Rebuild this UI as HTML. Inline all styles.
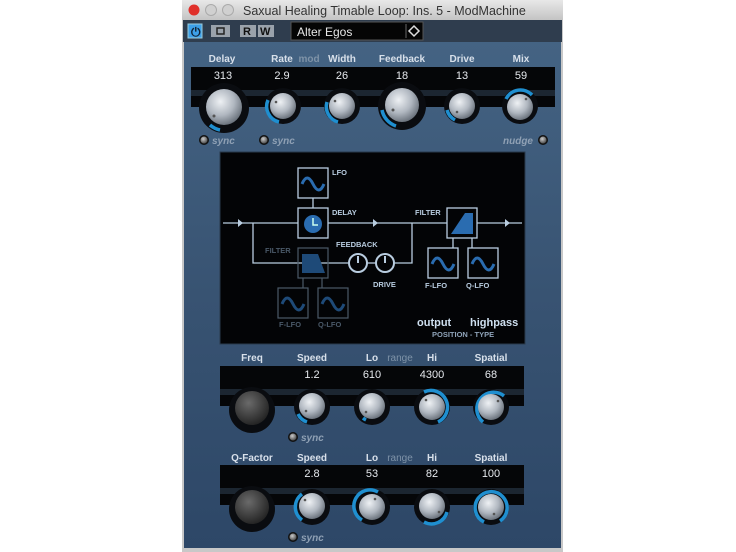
<!DOCTYPE html><html><head><style>
html,body{margin:0;padding:0;background:#fff;width:736px;height:552px;overflow:hidden}
svg{display:block}
text{font-family:"Liberation Sans",sans-serif}
</style></head><body>
<svg width="736" height="552" viewBox="0 0 736 552" xmlns="http://www.w3.org/2000/svg">
<defs>
<linearGradient id="tb" x1="0" y1="0" x2="0" y2="1"><stop offset="0" stop-color="#e8e8e8"/><stop offset="1" stop-color="#c4c4c4"/></linearGradient>
<linearGradient id="pn" x1="0" y1="0" x2="0" y2="1"><stop offset="0" stop-color="#446383"/><stop offset="0.5" stop-color="#385372"/><stop offset="1" stop-color="#2d4767"/></linearGradient>
<radialGradient id="met" cx="0.4" cy="0.35" r="0.7"><stop offset="0" stop-color="#eef1f4"/><stop offset="0.55" stop-color="#b0b7c0"/><stop offset="1" stop-color="#626a74"/></radialGradient>
<radialGradient id="dk" cx="0.4" cy="0.35" r="0.7"><stop offset="0" stop-color="#6a6a6a"/><stop offset="1" stop-color="#202020"/></radialGradient>
<radialGradient id="btn" cx="0.4" cy="0.35" r="0.7"><stop offset="0" stop-color="#ccc"/><stop offset="1" stop-color="#444"/></radialGradient>
</defs>
<rect x="182" y="0" width="381" height="552" fill="#c8c8c8"/>
<rect x="182" y="0" width="381" height="20" fill="url(#tb)"/>
<circle cx="194" cy="10" r="5.5" fill="#e0302a"/>
<circle cx="211" cy="10" r="5.5" fill="#d0d0d0" stroke="#aaa"/>
<circle cx="228" cy="10" r="5.5" fill="#d0d0d0" stroke="#aaa"/>
<text x="243" y="15" font-size="12.5" fill="#333">Saxual Healing Timable Loop: Ins. 5 - ModMachine</text>
<rect x="183" y="20" width="379" height="22" fill="#2f3d4e"/>
<rect x="188" y="24" width="14" height="14" fill="#3da0e8" stroke="#9cd" />
<text x="191" y="36" font-size="12" fill="#123" font-weight="bold">⏻</text>
<rect x="211" y="25" width="19" height="12" fill="#9aa2ab"/>
<rect x="217" y="28" width="7" height="6" fill="none" stroke="#222" stroke-width="1.5"/>
<rect x="240" y="25" width="16" height="12" fill="#9aa2ab"/><text x="243" y="35" font-size="11" font-weight="bold" fill="#111">R</text>
<rect x="258" y="25" width="16" height="12" fill="#9aa2ab"/><text x="260" y="35" font-size="11" font-weight="bold" fill="#111">W</text>
<rect x="291" y="22" width="132" height="18" fill="#050505" stroke="#555"/>
<text x="297" y="36" font-size="12" fill="#e8e8e8">Alter Egos</text>
<line x1="406" y1="24" x2="406" y2="38" stroke="#666"/>
<path d="M414 26 L419 31 L414 36 L409 31Z" fill="none" stroke="#ddd" stroke-width="1.5"/>
<rect x="184" y="42" width="377" height="506" fill="url(#pn)"/>
<g fill="#d8e0ea" font-size="10" font-weight="bold" text-anchor="middle">
<text x="222" y="62">Delay</text><text x="282" y="62">Rate</text><text x="342" y="62">Width</text><text x="402" y="62">Feedback</text><text x="462" y="62">Drive</text><text x="521" y="62">Mix</text>
<text x="309" y="62" fill="#7f93a8">mod</text>
<text x="252" y="361">Freq</text><text x="312" y="361">Speed</text><text x="372" y="361">Lo</text><text x="432" y="361">Hi</text><text x="491" y="361">Spatial</text>
<text x="400" y="361" fill="#7f93a8" font-weight="normal">range</text>
<text x="252" y="461">Q-Factor</text><text x="312" y="461">Speed</text><text x="372" y="461">Lo</text><text x="432" y="461">Hi</text><text x="491" y="461">Spatial</text>
<text x="400" y="461" fill="#7f93a8" font-weight="normal">range</text>
</g>
<rect x="191" y="67" width="364" height="40" fill="#050608"/>
<rect x="191" y="90" width="364" height="6" fill="#1c2631"/>
<rect x="220" y="366" width="304" height="40" fill="#050608"/>
<rect x="220" y="389" width="304" height="6" fill="#1c2631"/>
<rect x="220" y="465" width="304" height="40" fill="#050608"/>
<rect x="220" y="488" width="304" height="6" fill="#1c2631"/>
<g fill="#e6e9ee" font-size="11" text-anchor="middle">
<text x="223" y="79">313</text><text x="282" y="79">2.9</text><text x="342" y="79">26</text><text x="402" y="79">18</text><text x="462" y="79">13</text><text x="521" y="79">59</text>
<text x="312" y="378">1.2</text><text x="372" y="378">610</text><text x="432" y="378">4300</text><text x="491" y="378">68</text>
<text x="312" y="477">2.8</text><text x="372" y="477">53</text><text x="432" y="477">82</text><text x="491" y="477">100</text>
</g>
<g>
<circle cx="224" cy="108" r="25" fill="#0a0c10"/><path d="M210 125 A22 22 0 0 0 220 130" stroke="#1f8fd0" stroke-width="3.5" fill="none"/><circle cx="224" cy="107" r="18" fill="url(#met)"/><circle cx="214" cy="116" r="1.5" fill="#555"/>
<circle cx="283" cy="106" r="18" fill="#0a0c10"/><path d="M268 100 A16 16 0 0 0 279 122" stroke="#1f8fd0" stroke-width="3.5" fill="none"/><circle cx="283" cy="106" r="13" fill="url(#met)"/><circle cx="276" cy="102" r="1.3" fill="#555"/>
<circle cx="342" cy="106" r="18" fill="#0a0c10"/><path d="M327 102 A16 16 0 0 0 338 122" stroke="#1f8fd0" stroke-width="3.5" fill="none"/><circle cx="342" cy="106" r="13" fill="url(#met)"/><circle cx="335" cy="101" r="1.3" fill="#555"/>
<circle cx="402" cy="106" r="24" fill="#0a0c10"/><path d="M382 110 A21 21 0 0 0 396 126" stroke="#1f8fd0" stroke-width="3.5" fill="none"/><circle cx="402" cy="105" r="17" fill="url(#met)"/><circle cx="393" cy="110" r="1.5" fill="#555"/>
<circle cx="462" cy="106" r="18" fill="#0a0c10"/><path d="M447 110 A16 16 0 0 0 455 120" stroke="#1f8fd0" stroke-width="3.5" fill="none"/><circle cx="462" cy="106" r="13" fill="url(#met)"/><circle cx="457" cy="112" r="1.3" fill="#555"/>
<circle cx="520" cy="106" r="18" fill="#0a0c10"/><path d="M506 99 A16 16 0 0 1 532 95" stroke="#1f8fd0" stroke-width="3.5" fill="none"/><circle cx="520" cy="107" r="13" fill="url(#met)"/><circle cx="526" cy="99" r="1.3" fill="#555"/>
<circle cx="252" cy="410" r="23" fill="#0a0c10"/><circle cx="252" cy="408" r="17" fill="url(#dk)"/>
<circle cx="312" cy="407" r="18" fill="#0a0c10"/><path d="M298 414 A15 15 0 0 0 307 422" stroke="#1f8fd0" stroke-width="3.5" fill="none"/><circle cx="312" cy="406" r="13" fill="url(#met)"/><circle cx="306" cy="411" r="1.3" fill="#555"/>
<circle cx="372" cy="407" r="18" fill="#0a0c10"/><path d="M363 418 A15 15 0 0 0 366 420" stroke="#1f8fd0" stroke-width="3.5" fill="none"/><circle cx="372" cy="406" r="13" fill="url(#met)"/><circle cx="366" cy="412" r="1.3" fill="#555"/>
<circle cx="432" cy="407" r="18" fill="#0a0c10"/><path d="M424 392 A16 16 0 0 1 438 422" stroke="#1f8fd0" stroke-width="3.5" fill="none"/><circle cx="432" cy="407" r="13" fill="url(#met)"/><circle cx="426" cy="400" r="1.3" fill="#555"/>
<circle cx="491" cy="407" r="18" fill="#0a0c10"/><path d="M483 422 A16 16 0 0 1 504 396" stroke="#1f8fd0" stroke-width="3.5" fill="none"/><circle cx="491" cy="407" r="13" fill="url(#met)"/><circle cx="498" cy="401" r="1.3" fill="#555"/>
<circle cx="252" cy="509" r="23" fill="#0a0c10"/><circle cx="252" cy="507" r="17" fill="url(#dk)"/>
<circle cx="312" cy="507" r="18" fill="#0a0c10"/><path d="M302 520 A16 16 0 0 1 302 494" stroke="#1f8fd0" stroke-width="3.5" fill="none"/><circle cx="312" cy="506" r="13" fill="url(#met)"/><circle cx="305" cy="500" r="1.3" fill="#555"/>
<circle cx="372" cy="507" r="18" fill="#0a0c10"/><path d="M362 520 A16 16 0 0 1 378 492" stroke="#1f8fd0" stroke-width="3.5" fill="none"/><circle cx="372" cy="507" r="13" fill="url(#met)"/><circle cx="375" cy="499" r="1.3" fill="#555"/>
<circle cx="432" cy="507" r="18" fill="#0a0c10"/><path d="M424 522 A16 16 0 0 0 447 512" stroke="#1f8fd0" stroke-width="3.5" fill="none"/><circle cx="432" cy="506" r="13" fill="url(#met)"/><circle cx="439" cy="512" r="1.3" fill="#555"/>
<circle cx="491" cy="507" r="18" fill="#0a0c10"/><path d="M484 522 A16 16 0 1 1 500 521" stroke="#1f8fd0" stroke-width="3.5" fill="none"/><circle cx="491" cy="507" r="13" fill="url(#met)"/><circle cx="494" cy="514" r="1.3" fill="#555"/>
</g>
<g font-size="10" font-weight="bold" font-style="italic" fill="#8fa0b4">
<circle cx="204" cy="140" r="5" fill="#111"/><circle cx="204" cy="140" r="3.5" fill="url(#btn)"/><text x="212" y="144">sync</text>
<circle cx="264" cy="140" r="5" fill="#111"/><circle cx="264" cy="140" r="3.5" fill="url(#btn)"/><text x="272" y="144">sync</text>
<circle cx="543" cy="140" r="5" fill="#111"/><circle cx="543" cy="140" r="3.5" fill="url(#btn)"/><text x="503" y="144">nudge</text>
<circle cx="293" cy="437" r="5" fill="#111"/><circle cx="293" cy="437" r="3.5" fill="url(#btn)"/><text x="301" y="441">sync</text>
<circle cx="293" cy="537" r="5" fill="#111"/><circle cx="293" cy="537" r="3.5" fill="url(#btn)"/><text x="301" y="541">sync</text>
</g>
<rect x="220" y="152" width="305" height="192" fill="#030406" stroke="#2a3a4c"/>
<g stroke="#b9cde0" stroke-width="1.3" fill="none">
<line x1="223" y1="223" x2="298" y2="223"/><line x1="328" y1="223" x2="447" y2="223"/><line x1="477" y1="223" x2="522" y2="223"/>
<polyline points="253,223 253,263 349,263"/><line x1="367" y1="263" x2="376" y2="263"/><polyline points="394,263 412,263 412,223"/>
<rect x="298" y="168" width="30" height="30"/><rect x="298" y="208" width="30" height="30"/><rect x="447" y="208" width="30" height="30"/>
<rect x="428" y="248" width="30" height="30"/><rect x="468" y="248" width="30" height="30"/>
<line x1="313" y1="198" x2="313" y2="208"/><line x1="453" y1="248" x2="453" y2="238"/><line x1="472" y1="248" x2="472" y2="238"/>
<circle cx="358" cy="263" r="9" stroke-width="2"/><line x1="358" y1="263" x2="358" y2="256" stroke-width="2"/>
<circle cx="385" cy="263" r="9" stroke-width="2"/><line x1="385" y1="263" x2="385" y2="256" stroke-width="2"/>
</g>
<g stroke="#4a5968" stroke-width="1.2" fill="none">
<rect x="298" y="248" width="30" height="30"/><rect x="278" y="288" width="30" height="30"/><rect x="318" y="288" width="30" height="30"/>
<line x1="303" y1="288" x2="303" y2="278"/><line x1="322" y1="288" x2="322" y2="278"/>
</g>
<g fill="#2a6cb0">
<circle cx="313" cy="224" r="9"/>
<path d="M451 234 L465 213 L473 213 L473 234Z"/>
<path d="M302 254 L318 254 L325 273 L302 273Z" fill="#1e4a78"/>
</g>
<path d="M313 218 L313 225 L318 225" stroke="#cfe" stroke-width="1.5" fill="none"/>
<g stroke="#2a6cb0" stroke-width="3" fill="none">
<path d="M302 184 q5 -12 11 0 t11 0"/><path d="M432 264 q5 -12 11 0 t11 0"/><path d="M472 264 q5 -12 11 0 t11 0"/>
</g>
<g stroke="#1e4a78" stroke-width="3" fill="none">
<path d="M282 304 q5 -12 11 0 t11 0"/><path d="M322 304 q5 -12 11 0 t11 0"/>
</g>
<g fill="#b9cde0"><path d="M238 219 L243 223 L238 227Z"/><path d="M373 219 L378 223 L373 227Z"/><path d="M505 219 L510 223 L505 227Z"/></g>
<g font-family="Liberation Mono,monospace" font-size="7.5" font-weight="bold" fill="#b9cde0">
<text x="332" y="175">LFO</text><text x="332" y="215">DELAY</text><text x="415" y="215">FILTER</text><text x="336" y="247">FEEDBACK</text><text x="373" y="287">DRIVE</text>
<text x="425" y="288">F-LFO</text><text x="466" y="288">Q-LFO</text>
<text x="432" y="337" fill="#8fa3b8">POSITION  -  TYPE</text>
<text x="265" y="253" fill="#4a5968">FILTER</text><text x="279" y="327" fill="#4a5968">F-LFO</text><text x="318" y="327" fill="#4a5968">Q-LFO</text>
</g>
<text x="417" y="326" font-size="11" fill="#cfe0f0" font-weight="bold">output</text>
<text x="470" y="326" font-size="11" fill="#cfe0f0" font-weight="bold">highpass</text>
</svg>
</body></html>
